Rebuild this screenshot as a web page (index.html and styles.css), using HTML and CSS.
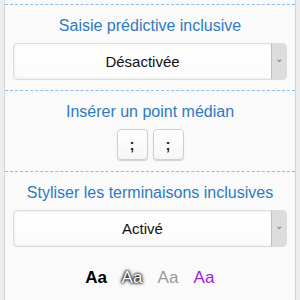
FILE: index.html
```html
<!DOCTYPE html>
<html lang="fr">
<head>
    <meta charset="UTF-8">
    <title>Écriture inclusive</title>
    <link rel="stylesheet" href="styles.css">
</head>
<body>
    <div class="panel">
        <section class="block">
            <h2>Saisie prédictive inclusive</h2>
            <div class="select">
                <span class="select-value">Désactivée</span>
                <span class="select-arrow">&#8964;</span>
            </div>
        </section>
        <section class="block keys-block">
            <h2>Insérer un point médian</h2>
            <div class="keys">
                <button class="key">;</button>
                <button class="key">;</button>
            </div>
        </section>
        <section class="block last">
            <h2>Styliser les terminaisons inclusives</h2>
            <div class="select">
                <span class="select-value">Activé</span>
                <span class="select-arrow">&#8964;</span>
            </div>
            <div class="styles">
                <span class="aa bold">Aa</span>
                <span class="aa shadow">Aa</span>
                <span class="aa light">Aa</span>
                <span class="aa purple">Aa</span>
            </div>
        </section>
    </div>
</body>
</html>
```

FILE: styles.css
```css
body {
    margin: 0;
    font-family: "Liberation Sans", Arial, sans-serif;
    background-color: #ededed;
}
.panel {
    margin: 0 4px;
    height: 300px;
    padding-top: 4px;
    box-sizing: border-box;
    background-color: #fafafa;
    border-left: 1px solid #d4d4d4;
    border-right: 1px solid #d4d4d4;
}
.block {
    border-top: 1px dashed #8fbde6;
    padding: 0 8px 10px;
    text-align: center;
}
.keys-block {
    padding-bottom: 11px;
}
.block.last {
    padding-bottom: 0;
}
h2 {
    margin: 0;
    padding: 12px 0 8px;
    font-size: 16px;
    font-weight: normal;
    color: #2f7bbf;
}
.select {
    display: flex;
    height: 35px;
    border: 1px solid #dcdcdc;
    border-radius: 4px;
    background: linear-gradient(#ffffff, #fbfbfb);
    box-shadow: inset 0 0 3px #e4e4e4;
    overflow: hidden;
}
.select-value {
    flex: 1;
    line-height: 35px;
    font-size: 15px;
    color: #111;
}
.select-arrow {
    width: 14px;
    background-color: #dcdcdc;
    border-left: 1px solid #bdbdbd;
    color: #777;
    font-size: 10px;
    line-height: 30px;
}
.keys {
    display: flex;
    justify-content: center;
    gap: 5px;
}
.key {
    width: 31px;
    height: 31px;
    padding: 0;
    border: 1px solid #cfcfcf;
    border-radius: 4px;
    background: linear-gradient(#ffffff, #f6f6f6);
    box-shadow: 0 1px 1px #d0d0d0;
    font-family: "Liberation Sans", Arial, sans-serif;
    font-size: 15px;
    font-weight: bold;
    color: #222;
}
.styles {
    display: flex;
    justify-content: center;
    gap: 14px;
    padding-top: 21px;
    font-size: 17px;
}
.aa {
    width: 22px;
}
.bold {
    font-weight: bold;
    color: #000;
}
.shadow {
    color: #fff;
    text-shadow: 0 0 2px #000, 0 0 3px #000, 0 0 4px #444;
}
.light {
    color: #999;
}
.purple {
    color: #a020e0;
}
```
